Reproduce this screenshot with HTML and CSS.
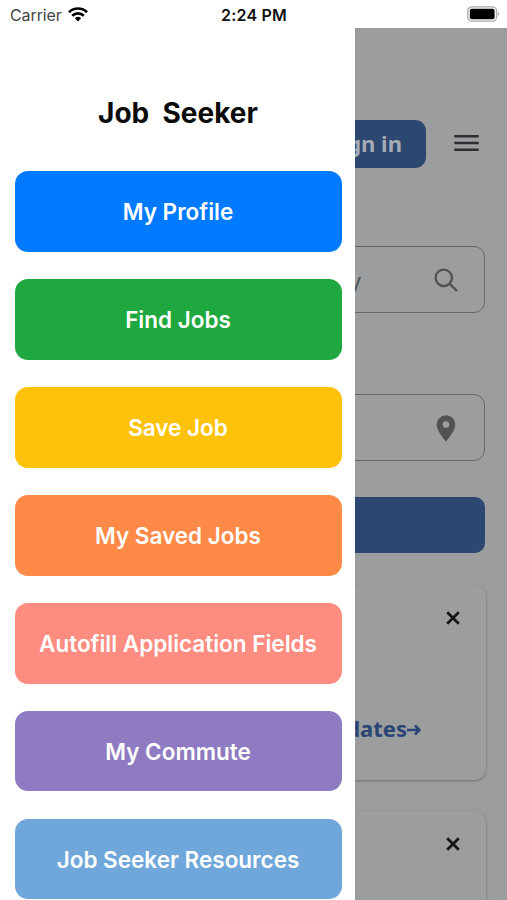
FILE: index.html
```html
<!DOCTYPE html>
<html lang="en">
<head>
  <meta charset="UTF-8">
  <meta name="viewport" content="width=device-width, initial-scale=1.0">
  <title>Job Seeker</title>
  <link rel="stylesheet" href="styles.css">
</head>
<body>
  <!-- Status bar -->
  <header class="status-bar">
    <div class="carrier">
      <span>Carrier</span>
      <svg class="wifi" viewBox="0 0 20 15" fill="none" stroke="#000" stroke-width="2.7">
        <path d="M1 5.2a12.8 12.8 0 0 1 18 0"/>
        <path d="M4.2 8.7a8.2 8.2 0 0 1 11.6 0"/>
        <path d="M6.9 11.2a4.5 4.5 0 0 1 6.2 0L10 14.4z" fill="#000" stroke="none"/>
      </svg>
    </div>
    <span class="time">2:24 PM</span>
    <div class="battery-wrap">
      <svg class="battery" viewBox="0 0 33 16">
        <rect x=".8" y=".8" width="28.8" height="14.4" rx="4.2" fill="#fff" stroke="#aaa" stroke-width="1.3"/>
        <rect x="2.8" y="2.8" width="24.8" height="10.4" rx="2"/>
        <path d="M31 6q1.3.8 1.3 2T31 10z" fill="#aaa"/>
      </svg>
    </div>
  </header>

  <div class="screen">
    <!-- Page behind the drawer -->
    <main class="page">
      <div class="top-bar">
        <a class="sign-in" href="#">Sign in</a>
        <svg class="menu-icon" viewBox="0 0 25 18" stroke="#2e2e32" stroke-width="2.5">
          <path d="M.3 2.2h24.4M.3 9h24.4M.3 15.8h24.4"/>
        </svg>
      </div>

      <div class="field">
        <span class="field-text">company</span>
        <svg class="search-icon" viewBox="0 0 24 24" fill="none" stroke="#515254" stroke-width="2.4">
          <circle cx="9.8" cy="9.8" r="8.2"/>
          <path d="M15.6 15.6l7.4 7.4"/>
        </svg>
      </div>
      <div class="field">
        <svg class="pin-icon" viewBox="0 0 20 27">
          <path fill="#515254" fill-rule="evenodd" d="M10 .3a9.3 9.3 0 0 0-9.3 9.3C.7 16.5 10 26.6 10 26.6s9.300-10.1 9.300-17A9.3 9.3 0 0 0 10 .3zm0 6a3.3 3.3 0 1 1 0 6.6 3.3 3.3 0 0 1 0-6.6z"/>
        </svg>
      </div>
      <div class="search-button"></div>

      <div class="card">
        <svg class="close-icon" viewBox="0 0 14 14" stroke="#141416" stroke-width="2.7">
          <path d="M1.2 1.2l11.6 11.6M12.8 1.2L1.2 12.8"/>
        </svg>
        <a class="updates" href="#">Updates<svg class="arrow" viewBox="0 0 14 12" fill="none" stroke="#2b4675" stroke-width="2.6">
          <path d="M0 6h12M8 1.5L12.5 6 8 10.5"/>
        </svg></a>
      </div>
      <div class="card">
        <svg class="close-icon" viewBox="0 0 14 14" stroke="#141416" stroke-width="2.7">
          <path d="M1.2 1.2l11.6 11.6M12.8 1.2L1.2 12.8"/>
        </svg>
      </div>
    </main>

    <!-- Drawer -->
    <nav class="drawer">
      <h1>Job&nbsp; Seeker</h1>
      <a class="item profile" href="#">My Profile</a>
      <a class="item find" href="#">Find Jobs</a>
      <a class="item save" href="#">Save Job</a>
      <a class="item saved" href="#">My Saved Jobs</a>
      <a class="item autofill" href="#">Autofill Application Fields</a>
      <a class="item commute" href="#">My Commute</a>
      <a class="item resources" href="#">Job Seeker Resources</a>
    </nav>
  </div>
</body>
</html>
```
FILE: styles.css
```css
* {
  margin: 0;
  padding: 0;
  box-sizing: border-box;
}

body {
  height: 900px;
  overflow: hidden;
  font-family: Inter, "Liberation Sans", sans-serif;
  background-color: #fff;
}

a {
  text-decoration: none;
}

svg {
  display: block;
}

/* Status bar */
.status-bar {
  height: 28px;
  padding: 1px 7px 0 10px;
  display: grid;
  grid-template-columns: 1fr auto 1fr;
  align-items: center;
}

.carrier {
  display: flex;
  align-items: center;
  gap: 6px;
  font-size: 16px;
  letter-spacing: -0.1px;
  color: #444;
}

.wifi {
  width: 20px;
  height: 15px;
  margin-top: -1px;
}

.time {
  margin-right: 2px;
  font-size: 16px;
  font-weight: 600;
  letter-spacing: 0.2px;
  color: #111;
}

.battery-wrap {
  display: flex;
  justify-content: flex-end;
}

.battery {
  width: 33px;
  height: 16px;
  margin-top: -2px;
}

/* Dimmed page */
.screen {
  position: relative;
  height: 872px;
}

.page {
  height: 872px;
  padding: 92px 22px 0;
  overflow: hidden;
  background-color: #9b9d9e;
  font-family: "Noto Sans", sans-serif;
}

.top-bar {
  display: flex;
  justify-content: flex-end;
  align-items: center;
  gap: 28px;
  padding-right: 6px;
  margin-bottom: 78px;
}

.sign-in {
  height: 48px;
  padding: 0 24px;
  border-radius: 11px;
  background-color: #2c4770;
  color: #a5abb5;
  font-size: 22px;
  font-weight: 700;
  line-height: 47px;
}

.menu-icon {
  width: 25px;
  height: 18px;
  margin-bottom: 2px;
}

.field {
  height: 67px;
  margin-bottom: 81px;
  padding-right: 26px;
  display: flex;
  justify-content: flex-end;
  align-items: center;
  border: 1px solid #66686a;
  border-radius: 11px;
}

.field + .field {
  margin-bottom: 36px;
}

.field-text {
  margin-right: 73px;
  font-size: 22px;
  color: #515254;
}

.search-icon {
  width: 24px;
  height: 24px;
}

.pin-icon {
  width: 20px;
  height: 27px;
  margin: 1px 2px 0 0;
}

.search-button {
  height: 56px;
  margin-bottom: 32px;
  border-radius: 10px;
  background-color: #2c4770;
}

.card {
  height: 195px;
  margin: 0 -1px 31px;
  padding: 26px 26px 37px;
  display: flex;
  flex-direction: column;
  justify-content: space-between;
  align-items: flex-end;
  border-radius: 12px;
  box-shadow: 0 1px 3px rgba(0, 0, 0, 0.3);
  background-color: #9b9d9e;
}

.close-icon {
  width: 14px;
  height: 14px;
}

.updates {
  display: flex;
  align-items: center;
  margin-right: 39px;
  font-size: 22px;
  font-weight: 700;
  line-height: 30px;
  color: #2b4675;
}

.arrow {
  width: 14px;
  height: 12px;
  margin-top: 3px;
}

/* Drawer over the page */
.drawer {
  position: absolute;
  top: 0;
  left: 0;
  width: 355px;
  height: 872px;
  padding: 65.4px 13.5px 0 14.5px;
  display: flex;
  flex-direction: column;
  gap: 27.3px;
  background-color: #fff;
}

.drawer h1 {
  height: 50.7px;
  font-size: 28px;
  font-weight: 700;
  line-height: 40px;
  text-align: center;
  color: #0b0b0b;
}

.item {
  height: 80.6px;
  flex-shrink: 0;
  display: flex;
  justify-content: center;
  align-items: center;
  border-radius: 13px;
  color: #fff;
  font-size: 22.5px;
  font-weight: 600;
}

.profile {
  background-color: #007aff;
}

.find {
  background-color: #1fa83f;
}

.save {
  background-color: #ffc20a;
}

.saved {
  background-color: #ff8946;
}

.autofill {
  background-color: #ff8c80;
}

.commute {
  background-color: #8e7bc1;
}

.resources {
  background-color: #6fa7da;
}
```
